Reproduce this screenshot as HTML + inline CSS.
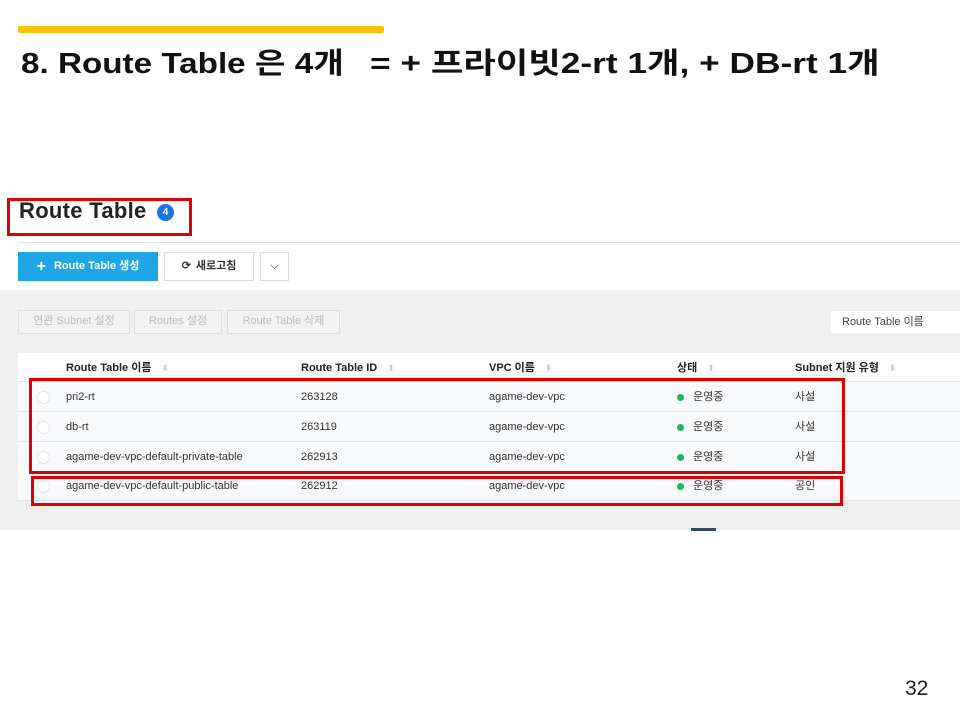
<!DOCTYPE html>
<html><head><meta charset="utf-8"><style>
*{margin:0;padding:0;box-sizing:border-box}
body{width:960px;height:720px;background:#fff;position:relative;overflow:hidden;font-family:"Liberation Sans","Noto Sans CJK KR",sans-serif;color:#222;line-height:1.2}
.a{position:absolute;white-space:nowrap}
.btn{position:absolute;border:1px solid #ddd;background:#fff;font-size:11px;display:flex;align-items:center;justify-content:center}
.dbtn{position:absolute;border:1px solid #ddd;background:#f2f2f2;color:#bbb;font-size:11px;display:flex;align-items:center;justify-content:center;top:310px;height:24px}
.row{position:absolute;left:18px;width:942px;height:30px;background:#f8f9fb;border-bottom:1px solid #e3e5e8;font-size:11px;color:#333}
.row span{position:absolute;top:8px;line-height:14px;height:14px}
.rad{position:absolute;left:19px;top:9px;width:13px;height:13px;border-radius:50%;background:#fff;border:1px solid #e5e5e5}
.dot{position:absolute;left:659px;top:12px;width:7px;height:7px;border-radius:50%;background:#1db954}
.hd{position:absolute;top:8px;font-size:11px;font-weight:bold;color:#222;line-height:14px;height:14px}
.sort{color:#ccc;font-size:9px;font-weight:normal;margin-left:10px}
.red{position:absolute;border:3px solid #e00000}
.t{position:absolute;top:44px;font-size:29px;font-weight:bold;color:#111;white-space:nowrap;transform-origin:left center;line-height:40px}
</style></head><body>
<div class="a" style="left:18px;top:26px;width:366px;height:7px;background:#ffc000;border-radius:2px"></div>
<div class="t" style="left:21px;transform:scaleX(1.146)">8. Route Table 은 4개</div>
<div class="t" style="left:370px;transform:scaleX(1.217)">= + 프라이빗2-rt 1개, + DB-rt 1개</div>

<div class="a" style="left:19px;top:198px;font-size:22px;font-weight:bold;color:#222;letter-spacing:0.3px">Route Table</div>
<div class="a" style="left:157px;top:204px;width:17px;height:17px;border-radius:50%;background:#1a73e8;color:#fff;font-size:10px;font-weight:bold;text-align:center;line-height:17px">4</div>
<div class="red" style="left:7px;top:198px;width:185px;height:38px"></div>
<div class="a" style="left:18px;top:242px;width:942px;height:1px;background:#e2e2e2"></div>

<div class="btn" style="left:18px;top:252px;width:140px;height:29px;background:#1ea7e4;border-color:#1ea7e4;color:#fff;font-weight:bold"><span style="font-size:16px;margin-right:8px">+</span>Route Table 생성</div>
<div class="btn" style="left:164px;top:252px;width:90px;height:29px;font-weight:bold;color:#333"><span style="margin-right:5px">⟳</span>새로고침</div>
<div class="btn" style="left:260px;top:252px;width:29px;height:29px;color:#333">⌵</div>

<div class="a" style="left:0;top:290px;width:960px;height:240px;background:#efefef"></div>
<div class="dbtn" style="left:18px;width:112px">연관 Subnet 설정</div>
<div class="dbtn" style="left:134px;width:88px">Routes 설정</div>
<div class="dbtn" style="left:227px;width:113px">Route Table 삭제</div>
<div class="a" style="left:831px;top:311px;width:129px;height:22px;background:#fff;font-size:11px;color:#444;padding:4px 0 0 11px;line-height:14px">Route Table 이름</div>

<div class="a" style="left:18px;top:353px;width:942px;height:29px;background:#fff;border-bottom:1px solid #e3e5e8">
<span class="hd" style="left:48px">Route Table 이름<span class="sort">⬍</span></span>
<span class="hd" style="left:283px">Route Table ID<span class="sort">⬍</span></span>
<span class="hd" style="left:471px">VPC 이름<span class="sort">⬍</span></span>
<span class="hd" style="left:659px">상태<span class="sort">⬍</span></span>
<span class="hd" style="left:777px">Subnet 지원 유형<span class="sort">⬍</span></span>
</div>
<div class="row" style="top:382px"><div class="rad"></div><span style="left:48px">pri2-rt</span><span style="left:283px">263128</span><span style="left:471px">agame-dev-vpc</span><div class="dot"></div><span style="left:675px">운영중</span><span style="left:777px">사설</span></div>
<div class="row" style="top:412px"><div class="rad"></div><span style="left:48px">db-rt</span><span style="left:283px">263119</span><span style="left:471px">agame-dev-vpc</span><div class="dot"></div><span style="left:675px">운영중</span><span style="left:777px">사설</span></div>
<div class="row" style="top:442px"><div class="rad"></div><span style="left:48px">agame-dev-vpc-default-private-table</span><span style="left:283px">262913</span><span style="left:471px">agame-dev-vpc</span><div class="dot"></div><span style="left:675px">운영중</span><span style="left:777px">사설</span></div>
<div class="row" style="top:471px"><div class="rad"></div><span style="left:48px">agame-dev-vpc-default-public-table</span><span style="left:283px">262912</span><span style="left:471px">agame-dev-vpc</span><div class="dot"></div><span style="left:675px">운영중</span><span style="left:777px">공인</span></div>
<div class="red" style="left:29px;top:378px;width:816px;height:96px"></div>
<div class="red" style="left:31px;top:476px;width:812px;height:30px"></div>
<div class="a" style="left:691px;top:528px;width:25px;height:3px;background:#3a4660"></div>

<div class="a" style="left:905px;top:676px;font-size:21px;color:#222">32</div>
</body></html>
